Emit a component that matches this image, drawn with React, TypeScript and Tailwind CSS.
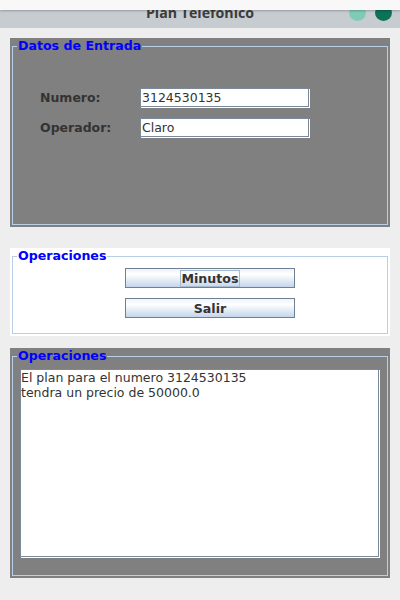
import React from "react";

function Group({
  title,
  gray,
  className,
  children,
}: {
  title: string;
  gray: boolean;
  className: string;
  children: React.ReactNode;
}) {
  return (
    <div className={`${gray ? "bg-[#808080]" : "bg-white"} p-[2px] ${className}`}>
      <fieldset className="m-0 h-full border border-[#b8cfe5] p-0">
        <legend className="ml-[4px] px-[1px] text-[12.6px] font-bold leading-[12px] text-[#0000ff]">
          {title}
        </legend>
        {children}
      </fieldset>
    </div>
  );
}

function Field({ value }: { value: string }) {
  return (
    <div className="h-[19px] w-[169px] border border-[#7a8a9a] bg-white px-[1px] text-[12.5px] leading-[17px] text-[#333333] shadow-[1px_1px_0_#ffffff]">
      {value}
    </div>
  );
}

function Btn({ label, focused }: { label: string; focused?: boolean }) {
  return (
    <div className="flex h-[20px] w-[170px] items-center justify-center border border-[#6f8092] bg-[linear-gradient(to_bottom,#eef3f9_0%,#ffffff_30%,#c4d5ea_100%)] text-[12.6px] font-bold text-[#333333]">
      <span
        className={`${focused ? "border-[#a6bbd2]" : "border-transparent"} border px-[1px] leading-[15px]`}
      >
        {label}
      </span>
    </div>
  );
}

export default function App() {
  return (
    <div className="h-[600px] w-[400px] overflow-hidden bg-[#eeeeee] font-['DejaVu_Sans',sans-serif]">
      {/* title bar */}
      <div className="relative h-[28px] overflow-hidden bg-[#c7ccd0]">
        <div className="grid h-full grid-cols-[1fr_auto_1fr]">
          <div />
          <div className="pt-[5px] font-['Open_Sans',sans-serif] text-[14.2px] font-bold leading-[16px] text-[#3c3c3c]">
            Plan Telefonico
          </div>
          <div className="flex items-start justify-end gap-[9px] pr-[8px] pt-[4px]">
            <div className="h-[17px] w-[17px] rounded-full bg-[#7fcbb6]" />
            <div className="h-[17px] w-[17px] rounded-full bg-[#0d7257]" />
          </div>
        </div>
        <div className="absolute inset-x-0 top-0 h-[10px] bg-[#f8f8f8] shadow-[0_1px_2px_rgba(0,0,0,0.25)]" />
      </div>

      <div className="px-[10px] pt-[10px]">
        <Group title="Datos de Entrada" gray className="h-[189px]">
          <div className="flex flex-col gap-[11px] pl-[27px] pt-[36px]">
            <div className="flex items-center">
              <div className="w-[100px] text-[12.5px] font-bold leading-[19px] text-[#333333]">Numero:</div>
              <Field value="3124530135" />
            </div>
            <div className="flex items-center">
              <div className="w-[100px] text-[12.5px] font-bold leading-[19px] text-[#333333]">Operador:</div>
              <Field value="Claro" />
            </div>
          </div>
        </Group>

        <Group title="Operaciones" gray={false} className="mt-[21px] h-[88px]">
          <div className="flex flex-col gap-[10px] pl-[112px] pt-[6px]">
            <Btn label="Minutos" focused />
            <Btn label="Salir" />
          </div>
        </Group>

        <Group title="Operaciones" gray className="mt-[12px] h-[230px]">
          <div className="pl-[7px] pt-[7px]">
            <div className="h-[188px] w-[359px] border border-[#7a8a9a] bg-white text-[12.5px] leading-[15px] text-[#333333] shadow-[1px_1px_0_#ffffff]">
              El plan para el numero 3124530135
              <br />
              tendra un precio de 50000.0
            </div>
          </div>
        </Group>
      </div>
    </div>
  );
}
